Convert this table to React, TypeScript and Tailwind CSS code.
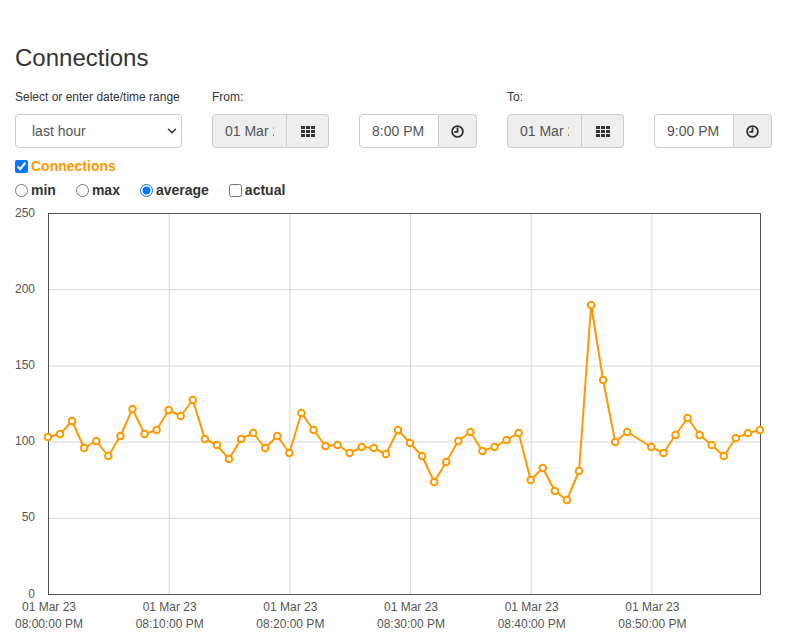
import { ChevronDown } from "lucide-react";

// pixel y of each minute sample (index 49 has no data)
const samples: (number | null)[] = [
  437, 434, 421, 448, 441, 456, 436, 409, 434, 430,
  410, 416, 400, 439, 445, 459, 439, 433, 448, 436,
  453, 413, 430, 446, 445, 453, 447, 448, 454, 430,
  443, 456, 482, 462, 441, 432, 451, 447, 440, 433,
  480, 468, 491, 500, 471, 305, 380, 442, 432, null,
  447, 453, 435, 418, 435, 445, 456, 438, 433, 430,
];

const left = 48;
const right = 760;
const top = 213;
const bottom = 594;
const step = (right - left) / 59;
const tenMin = step * 10;

const yTicks = [250, 200, 150, 100, 50, 0];
const xTicks = ["08:00:00 PM", "08:10:00 PM", "08:20:00 PM", "08:30:00 PM", "08:40:00 PM", "08:50:00 PM"];

function GridIcon() {
  return (
    <svg width="14" height="11" viewBox="0 0 14 11" fill="#333">
      {[0, 5, 10].map((x) =>
        [0, 4, 8].map((y) => <rect key={`${x}-${y}`} x={x} y={y} width="4" height="3" />)
      )}
    </svg>
  );
}

function ClockIcon() {
  return (
    <svg width="13" height="13" viewBox="0 0 13 13" fill="none" stroke="#333" strokeWidth="1.8">
      <circle cx="6.5" cy="6.5" r="5.4" />
      <path d="M6.5 3.2V6.9H4" strokeLinecap="round" strokeLinejoin="round" />
    </svg>
  );
}

function DateGroup({ value }: { value: string }) {
  return (
    <div className="flex h-[34px] w-[117px]">
      <input
        readOnly
        value={value}
        className="w-[75px] min-w-0 rounded-l-[4px] border border-[#ccc] bg-[#eee] px-[12px] text-[14px] text-[#555] outline-none"
      />
      <button className="flex w-[42px] items-center justify-center rounded-r-[4px] border border-l-0 border-[#ccc] bg-[#eee]">
        <GridIcon />
      </button>
    </div>
  );
}

function TimeGroup({ value }: { value: string }) {
  return (
    <div className="flex h-[34px] w-[118px]">
      <input
        readOnly
        value={value}
        className="w-[80px] min-w-0 rounded-l-[4px] border border-[#ccc] bg-white px-[12px] text-[14px] text-[#555] outline-none"
      />
      <button className="flex w-[38px] items-center justify-center rounded-r-[4px] border border-l-0 border-[#ccc] bg-[#eee]">
        <ClockIcon />
      </button>
    </div>
  );
}

function Field({ label, children }: { label?: string; children: React.ReactNode }) {
  return (
    <div className="flex flex-col">
      <div className="mb-[8px] h-[17px] text-[12px] leading-[17px] text-[#333]">{label ?? "\u00a0"}</div>
      {children}
    </div>
  );
}

function Chart() {
  const pts = samples
    .map((y, i) => (y === null ? null : { x: left + step * i, y }))
    .filter((p): p is { x: number; y: number } => p !== null);
  const line = pts.map((p, i) => `${i === 0 ? "M" : "L"}${p.x.toFixed(1)} ${p.y}`).join(" ");
  const yOf = (v: number) => bottom - ((bottom - top) * v) / 250;

  return (
    <svg width="787" height="434" viewBox="0 200 787 434" className="block" style={{ fontFamily: "'Liberation Sans', Arial, sans-serif" }}>
      {[200, 150, 100, 50].map((v) => (
        <line key={v} x1={left} x2={right} y1={yOf(v) + 0.5} y2={yOf(v) + 0.5} stroke="#d6d6d6" />
      ))}
      {[1, 2, 3, 4, 5].map((k) => (
        <line key={k} x1={left + tenMin * k + 0.5} x2={left + tenMin * k + 0.5} y1={top} y2={bottom} stroke="#d6d6d6" />
      ))}
      <rect x={left + 0.5} y={top + 0.5} width={right - left} height={bottom - top} fill="none" stroke="#555" />
      {yTicks.map((v) => (
        <text key={v} x="35" y={yOf(v) + 0.5} textAnchor="end" dominantBaseline="middle" fontSize="12" fill="#555">
          {v}
        </text>
      ))}
      {xTicks.map((t, k) => (
        <g key={t} fontSize="12" fill="#555" textAnchor="middle">
          <text x={left + tenMin * k + 1} y="611">01 Mar 23</text>
          <text x={left + tenMin * k + 1} y="628">{t}</text>
        </g>
      ))}
      <path d={line} fill="none" stroke="#ff9900" strokeWidth="2" strokeLinejoin="round" />
      {pts.map((p, i) => (
        <circle key={i} cx={p.x} cy={p.y} r="3.3" fill="#fff" stroke="#ff9900" strokeWidth="2" />
      ))}
    </svg>
  );
}

export default function App() {
  return (
    <div className="min-h-[634px] w-[787px] overflow-hidden bg-white pt-[45px] text-[#333]" style={{ fontFamily: "'Liberation Sans', Arial, sans-serif" }}>
      <div className="px-[15px]">
        <h2 className="text-[24px] leading-[26.4px] font-normal">Connections</h2>

        <div className="mt-[18px] flex gap-[30px]">
          <Field label="Select or enter date/time range">
            <div className="relative h-[34px] w-[167px]">
              <select className="h-full w-full appearance-none rounded-[4px] border border-[#ccc] bg-white pl-[16px] text-[14px] text-[#555] outline-none">
                <option>last hour</option>
              </select>
              <ChevronDown size={14} strokeWidth={2.6} className="pointer-events-none absolute top-[10px] right-[3px] text-[#333]" />
            </div>
          </Field>
          <Field label="From:">
            <DateGroup value="01 Mar 2023" />
          </Field>
          <Field>
            <TimeGroup value="8:00 PM" />
          </Field>
          <Field label="To:">
            <DateGroup value="01 Mar 2023" />
          </Field>
          <Field>
            <TimeGroup value="9:00 PM" />
          </Field>
        </div>

        <label className="mt-[8px] flex h-[20px] items-center gap-[3px]">
          <input type="checkbox" defaultChecked className="m-0 h-[13px] w-[13px]" />
          <span className="text-[14px] font-bold text-[#ff9900]">Connections</span>
        </label>

        <div className="mt-[4px] flex h-[20px] items-center gap-[20px] text-[14px] font-bold">
          <label className="flex items-center gap-[3px]">
            <input type="radio" name="agg" className="m-0 h-[13px] w-[13px]" />
            min
          </label>
          <label className="flex items-center gap-[3px]">
            <input type="radio" name="agg" className="m-0 h-[13px] w-[13px]" />
            max
          </label>
          <label className="flex items-center gap-[3px]">
            <input type="radio" name="agg" defaultChecked className="m-0 h-[13px] w-[13px]" />
            average
          </label>
          <label className="flex items-center gap-[3px]">
            <input type="checkbox" className="m-0 h-[13px] w-[13px]" />
            actual
          </label>
        </div>
      </div>

      <Chart />
    </div>
  );
}
